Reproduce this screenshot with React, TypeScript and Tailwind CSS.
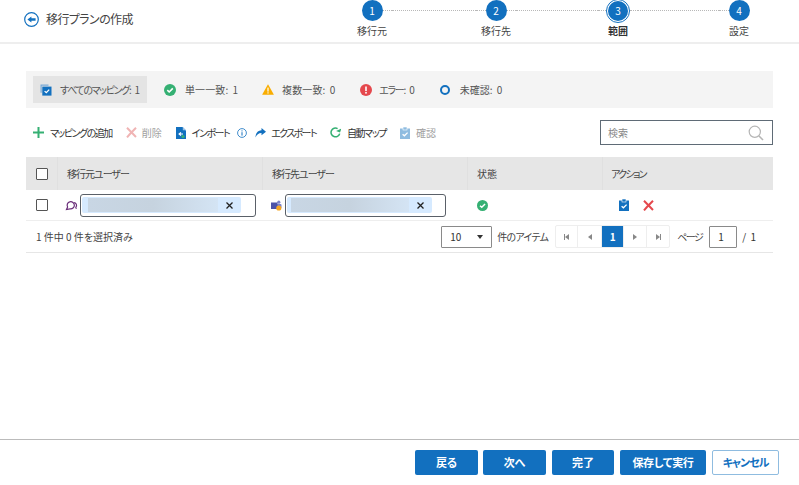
import React from "react";

const BLUE = "#1270bf";

function Step({ n, label, active, first, last }: { n: number; label: string; active?: boolean; first?: boolean; last?: boolean }) {
  return (
    <div className="flex w-[40px] flex-col items-center">
      <div className="flex h-[21px] w-full items-center">
        <div className={first ? "flex-1" : "flex-1 border-t border-dotted border-[#b8b8b8]"} />
        {active ? (
          <div className="flex h-[24px] w-[24px] shrink-0 items-center justify-center rounded-full border border-[#1270bf] bg-white">
            <div className="flex h-[20px] w-[20px] items-center justify-center rounded-full bg-[#1270bf] text-[10px] text-white">{n}</div>
          </div>
        ) : (
          <div className="flex h-[21px] w-[21px] shrink-0 items-center justify-center rounded-full bg-[#1270bf] text-[10px] text-white">{n}</div>
        )}
        <div className={last ? "flex-1" : "flex-1 border-t border-dotted border-[#b8b8b8]"} />
      </div>
      <div className={`mt-[3px] whitespace-nowrap text-[10px] leading-[14px] ${active ? "font-bold text-[#333]" : "text-[#444]"}`}>{label}</div>
    </div>
  );
}

function Connector({ w }: { w: string }) {
  return (
    <div className={`h-[21px] ${w} flex items-center`}>
      <div className="w-full border-t border-dotted border-[#b8b8b8]" />
    </div>
  );
}

function CheckCircle({ size = 12 }: { size?: number }) {
  return (
    <svg width={size} height={size} viewBox="0 0 12 12" className="shrink-0">
      <circle cx="6" cy="6" r="6" fill="#35b073" />
      <path d="M3.3 6.2 5.2 8 8.8 4.4" fill="none" stroke="#fff" strokeWidth="1.6" />
    </svg>
  );
}

function AllIcon() {
  return (
    <svg width="12" height="12" viewBox="0 0 12 12" className="shrink-0">
      <path d="M.5.5h8v1.2H1.7v7H.5z" fill="#7aa9d6" />
      <rect x="2.3" y="2.6" width="9.2" height="9" fill="#1270bf" />
      <path d="M4.6 7.1 6.3 8.7 9.2 5.6" fill="none" stroke="#fff" strokeWidth="1.3" />
    </svg>
  );
}

function Warn() {
  return (
    <svg width="12" height="11" viewBox="0 0 12 11" className="shrink-0">
      <path d="M6 .3 11.9 10.7H.1z" fill="#f9ad00" />
      <rect x="5.4" y="3.6" width="1.2" height="4" fill="#fff" />
      <rect x="5.4" y="8.3" width="1.2" height="1.2" fill="#fff" />
    </svg>
  );
}

function ErrIcon() {
  return (
    <svg width="12" height="12" viewBox="0 0 12 12" className="shrink-0">
      <circle cx="6" cy="6" r="6" fill="#e5484d" />
      <rect x="5.2" y="2.5" width="1.6" height="4.6" fill="#fff" />
      <rect x="5.2" y="8" width="1.6" height="1.6" fill="#fff" />
    </svg>
  );
}

function RedX({ color = "#e5484d" }: { color?: string }) {
  return (
    <svg width="11" height="11" viewBox="0 0 11 11" className="shrink-0">
      <path d="M1 .8 10 10M10 .8 3.5 7.5 1 10.4" fill="none" stroke={color} strokeWidth="2" />
    </svg>
  );
}

function Clipboard({ color, check = "#fff" }: { color: string; check?: string }) {
  return (
    <svg width="10" height="12" viewBox="0 0 10 12" className="shrink-0">
      <rect x="0" y="1.5" width="10" height="10.5" fill={color} />
      <rect x="3" y="0" width="4" height="3" fill={color} stroke="#fff" strokeWidth="0.6" />
      <path d="M2.6 7.2 4.4 8.8 7.6 5.6" fill="none" stroke={check} strokeWidth="1.3" />
    </svg>
  );
}

function SummaryItem({ icon, label, value, cls, gap, track }: { icon: React.ReactNode; label: string; value: string; cls: string; gap: string; track: string }) {
  return (
    <div className={`flex items-center ${gap} ${cls}`}>
      {icon}
      <span className="whitespace-pre text-[#555]">
        <span className={track}>{label}</span> <span className="ml-[2px]">{value}</span>
      </span>
    </div>
  );
}

function Tool({ icon, text, muted, gap = "gap-[6px]", ml, track = "" }: { icon: React.ReactNode; text: string; muted?: boolean; gap?: string; ml: string; track?: string }) {
  return (
    <div className={`flex items-center ${gap} ${ml}`}>
      {icon}
      <span className={`whitespace-nowrap ${track} ${muted ? "text-[#a0a0a0]" : "text-[#333]"}`}>{text}</span>
    </div>
  );
}

function Box({ size = 12 }: { size?: number }) {
  return <div className="shrink-0 rounded-[1px] border border-[#555] bg-white" style={{ width: size, height: size }} />;
}

function Token({ bar, pl }: { bar: string; pl: string }) {
  return (
    <div className="flex h-[23px] flex-1 items-center rounded-[3px] border border-[#5a6068] bg-white pl-[1px]">
      <div className={`flex h-[16px] ${bar} ${pl} items-center rounded-[2px] bg-[#d6eaff]`}>
        <div className="h-[14px] flex-1 bg-gradient-to-r from-[#c8d6e4] via-[#c6d3df] to-[#d4e4f4]" />
        <svg width="9" height="9" viewBox="0 0 9 9" className="mx-[7px] shrink-0">
          <path d="M1.5 1.5 7.5 7.5M7.5 1.5 1.5 7.5" stroke="#222" strokeWidth="1.3" />
        </svg>
      </div>
    </div>
  );
}

function Pager({ children, active, w }: { children: React.ReactNode; active?: boolean; w: string }) {
  return (
    <div className={`flex h-[21px] ${w} items-center justify-center border-r border-[#eeeeee] last:border-r-0 ${active ? "bg-[#1270bf] font-bold text-white" : "text-[#777]"}`}>
      {children}
    </div>
  );
}

function Btn({ w, children }: { w: string; children: React.ReactNode }) {
  return (
    <div className={`flex h-[25px] ${w} items-center justify-center rounded-[2px] bg-[#1270bf] text-[11px] font-bold text-white`}>{children}</div>
  );
}

export default function App() {
  return (
    <div
      className="flex h-[485px] w-[799px] flex-col overflow-hidden bg-white text-[10px] text-[#444] [font-feature-settings:'palt']"
      style={{ fontFamily: "'Noto Sans CJK JP', 'Noto Sans', sans-serif" }}
    >
      {/* header */}
      <div className="flex h-[44px] shrink-0 items-start border-b-2 border-[#eeeeee]">
        <div className="ml-[24px] mt-[11px] flex w-[108px] items-center gap-[7px]">
          <svg width="15" height="15" viewBox="0 0 15 15" className="shrink-0">
            <circle cx="7.5" cy="7.5" r="6.8" fill="none" stroke={BLUE} strokeWidth="1.2" />
            <path d="M3.4 7.5 7.4 4.4V6.3h4.2v2.4H7.4v1.9z" fill={BLUE} />
          </svg>
          <span className="whitespace-nowrap text-[12px] leading-[16px] tracking-[-0.6px] text-[#444]">移行プランの作成</span>
        </div>
        <div className="ml-[220px] flex">
          <Step n={1} label="移行元" first />
          <Connector w="w-[84px]" />
          <Step n={2} label="移行先" />
          <Connector w="w-[82px]" />
          <Step n={3} label="範囲" active />
          <Connector w="w-[81px]" />
          <Step n={4} label="設定" last />
        </div>
      </div>

      {/* main */}
      <div className="flex flex-1 flex-col px-[26px] pt-[27px]">
        {/* summary */}
        <div className="flex h-[37px] items-center bg-[#f4f4f4] pl-[7px]">
          <div className="flex h-[27px] w-[114px] items-center gap-[8px] bg-[#e4e4e4] pl-[7px]">
            <AllIcon />
            <span className="whitespace-pre text-[#555]">
              <span className="tracking-[-1.35px]">すべてのマッピング:</span> <span className="ml-[2px]">1</span>
            </span>
          </div>
          <SummaryItem icon={<CheckCircle />} label="単一一致:" value="1" cls="ml-[17px]" gap="gap-[9px]" track="tracking-[0.1px]" />
          <SummaryItem icon={<Warn />} label="複数一致:" value="0" cls="ml-[24px]" gap="gap-[8px]" track="tracking-[0.1px]" />
          <SummaryItem icon={<ErrIcon />} label="エラー:" value="0" cls="ml-[25px]" gap="gap-[7px]" track="tracking-[-1.3px]" />
          <SummaryItem
            icon={<div className="h-[10px] w-[10px] rounded-full border-2 border-[#1270bf]" />}
            label="未確認:"
            value="0"
            cls="ml-[25px]"
            gap="gap-[10px]"
            track="tracking-[0px]"
          />
        </div>

        {/* toolbar */}
        <div className="mt-[12px] flex h-[25px] items-center pl-[7px]">
          <Tool
            ml=""
            track="tracking-[-1.5px]"
            icon={
              <svg width="11" height="11" viewBox="0 0 11 11" className="shrink-0">
                <path d="M5.5 0v11M0 5.5h11" stroke="#35b073" strokeWidth="2" />
              </svg>
            }
            text="マッピングの追加"
          />
          <Tool ml="ml-[14px]" muted icon={<RedX color="#f0b4b4" />} text="削除" gap="gap-[5px]" />
          <Tool
            ml="ml-[14px]"
            track="tracking-[-1.5px]"
            icon={
              <svg width="10" height="12" viewBox="0 0 10 12" className="shrink-0">
                <path d="M0 0h6.5L10 3.5V12H0z" fill="#1270bf" />
                <path d="M6.8 0 10 3.2H6.8z" fill="#9cc3e6" />
                <path d="M3 7h4M5 5.3 3 7l2 1.7" fill="none" stroke="#fff" strokeWidth="1.1" />
                <circle cx="7" cy="9.5" r="1.6" fill="#35b073" />
              </svg>
            }
            text="インポート"
          />
          <svg width="10" height="10" viewBox="0 0 10 10" className="ml-[8px] shrink-0">
            <circle cx="5" cy="5" r="4.4" fill="none" stroke={BLUE} strokeWidth="0.8" />
            <rect x="4.5" y="4.2" width="1" height="3.4" fill={BLUE} />
            <rect x="4.5" y="2.4" width="1" height="1" fill={BLUE} />
          </svg>
          <Tool
            ml="ml-[8px]"
            gap="gap-[5px]"
            track="tracking-[-1.6px]"
            icon={
              <svg width="11" height="10" viewBox="0 0 11 10" className="shrink-0">
                <path d="M6.5 0 11 3.8 6.5 7.2V5C3.5 5 1.8 6.5.5 9.5.5 5.5 2.5 2.5 6.5 2.3z" fill="#1270bf" />
              </svg>
            }
            text="エクスポート"
          />
          <Tool
            ml="ml-[14px]"
            track="tracking-[-1.4px]"
            icon={
              <svg width="11" height="11" viewBox="0 0 11 11" className="shrink-0">
                <path d="M9.7 6.6A4.4 4.4 0 1 1 7.6 1.6" fill="none" stroke="#35b073" strokeWidth="1.5" />
                <path d="M6.5 4.6h4.2V.6z" fill="#35b073" transform="rotate(20 8 3)" />
              </svg>
            }
            text="自動マップ"
          />
          <Tool ml="ml-[14px]" muted icon={<Clipboard color="#8fbce0" />} text="確認" />
          <div className="ml-auto flex h-[25px] w-[173px] items-center justify-between border border-[#5f6b76] pl-[7px] pr-[8px] text-[#888]">
            <span>検索</span>
            <svg width="16" height="16" viewBox="0 0 16 16" className="shrink-0">
              <circle cx="6.8" cy="6.8" r="5.6" fill="none" stroke="#b5b5b5" strokeWidth="1.2" />
              <path d="M11 11 15 15" stroke="#b5b5b5" strokeWidth="1.6" />
            </svg>
          </div>
        </div>

        {/* table */}
        <div className="mt-[12px] border-b border-[#e6e6e6]">
          <div className="flex h-[33px] items-center bg-[#e6e6e6] text-[#444]">
            <div className="flex h-full w-[32px] items-center justify-center border-r border-[#e0e0e0]"><Box /></div>
            <div className="flex h-full w-[205px] items-center border-r border-[#e0e0e0] pl-[9px] tracking-[-1px]">移行元ユーザー</div>
            <div className="flex h-full w-[205px] items-center border-r border-[#e0e0e0] pl-[9px] tracking-[-1px]">移行先ユーザー</div>
            <div className="flex h-full w-[135px] items-center border-r border-[#e0e0e0] pl-[9px]">状態</div>
            <div className="flex h-full flex-1 items-center pl-[8px] tracking-[-1.7px]">アクション</div>
          </div>
          <div className="flex h-[31px] items-center border-b border-[#eeeeee]">
            <div className="flex w-[32px] justify-center"><Box /></div>
            <div className="flex w-[205px] items-center gap-[2px] pl-[7px] pr-[7px]">
              <svg width="13" height="13" viewBox="0 0 13 13" className="shrink-0">
                <path d="M1.5 10.5 2.6 8A3.6 3.6 0 1 1 5 9.8z" fill="none" stroke="#6b2f7a" strokeWidth="1.2" />
                <path d="M8.8 3.6a2.8 2.8 0 0 1 2 4.7l.6 1.4" fill="none" stroke="#6b2f7a" strokeWidth="1.2" />
              </svg>
              <Token bar="w-[159px]" pl="pl-[6px]" />
            </div>
            <div className="flex w-[205px] items-center gap-[3px] pl-[8px] pr-[22px]">
              <svg width="11" height="11" viewBox="0 0 11 11" className="shrink-0">
                <circle cx="7.8" cy="2.2" r="1.6" fill="#7b83c9" />
                <rect x="5.5" y="4" width="5" height="4.5" rx="1" fill="#7b83c9" />
                <rect x="0" y="2.5" width="6.5" height="6.5" fill="#4b53a8" />
                <circle cx="7.8" cy="8" r="2.6" fill="#f5a623" />
              </svg>
              <Token bar="w-[145px]" pl="pl-[4px]" />
            </div>
            <div className="flex w-[135px] items-center pl-[9px]"><CheckCircle size={11} /></div>
            <div className="flex flex-1 items-center gap-[14px] pl-[16px]">
              <Clipboard color="#1270bf" />
              <RedX />
            </div>
          </div>
          <div className="flex h-[31px] items-center pl-[10px]">
            <span className="text-[#444]">1 件中 0 件を選択済み</span>
            <div className="ml-auto flex items-center">
              <div className="flex h-[22px] w-[51px] items-center justify-between rounded-[1px] border border-[#8a8a8a] px-[8px] text-[#333]">
                <span>10</span>
                <span className="h-0 w-0 border-x-[3px] border-t-[4px] border-x-transparent border-t-[#333]" />
              </div>
              <span className="ml-[5px] whitespace-nowrap tracking-[-0.7px]">件のアイテム</span>
              <div className="ml-[7px] flex items-center overflow-hidden rounded-[2px] border border-[#eeeeee]">
                <Pager w="w-[22px]"><span className="flex items-center"><span className="h-[6px] w-[1px] bg-[#888]" /><span className="h-0 w-0 border-y-[3px] border-r-[4px] border-y-transparent border-r-[#888]" /></span></Pager>
                <Pager w="w-[24px]"><span className="h-0 w-0 border-y-[3px] border-r-[4px] border-y-transparent border-r-[#888]" /></Pager>
                <Pager w="w-[22px]" active>1</Pager>
                <Pager w="w-[23px]"><span className="h-0 w-0 border-y-[3px] border-l-[4px] border-y-transparent border-l-[#888]" /></Pager>
                <Pager w="w-[22px]"><span className="flex items-center"><span className="h-0 w-0 border-y-[3px] border-l-[4px] border-y-transparent border-l-[#888]" /><span className="h-[6px] w-[1px] bg-[#888]" /></span></Pager>
              </div>
              <span className="ml-[7px] whitespace-nowrap tracking-[-1.5px]">ページ</span>
              <div className="ml-[7px] flex h-[22px] w-[28px] items-center rounded-[1px] border border-[#8a8a8a] pl-[8px] text-[#333]">1</div>
              <span className="ml-[5px] mr-[16px] whitespace-nowrap tracking-[1px] text-[#333]">/ 1</span>
            </div>
          </div>
        </div>
      </div>

      {/* footer */}
      <div className="flex h-[46px] shrink-0 items-start border-t border-[#bbbbbb] pl-[415px] pt-[10px]">
        <div className="flex">
          <Btn w="w-[63px]">戻る</Btn>
          <Btn w="ml-[5px] w-[63px]">次へ</Btn>
          <Btn w="ml-[6px] w-[62px]">完了</Btn>
          <Btn w="ml-[6px] w-[86px] tracking-[-0.3px]">保存して実行</Btn>
          <div className="ml-[6px] flex h-[25px] w-[67px] items-center justify-center rounded-[2px] border border-[#8fbce0] text-[11px] font-bold tracking-[-1px] text-[#1270bf]">キャンセル</div>
        </div>
      </div>
    </div>
  );
}
